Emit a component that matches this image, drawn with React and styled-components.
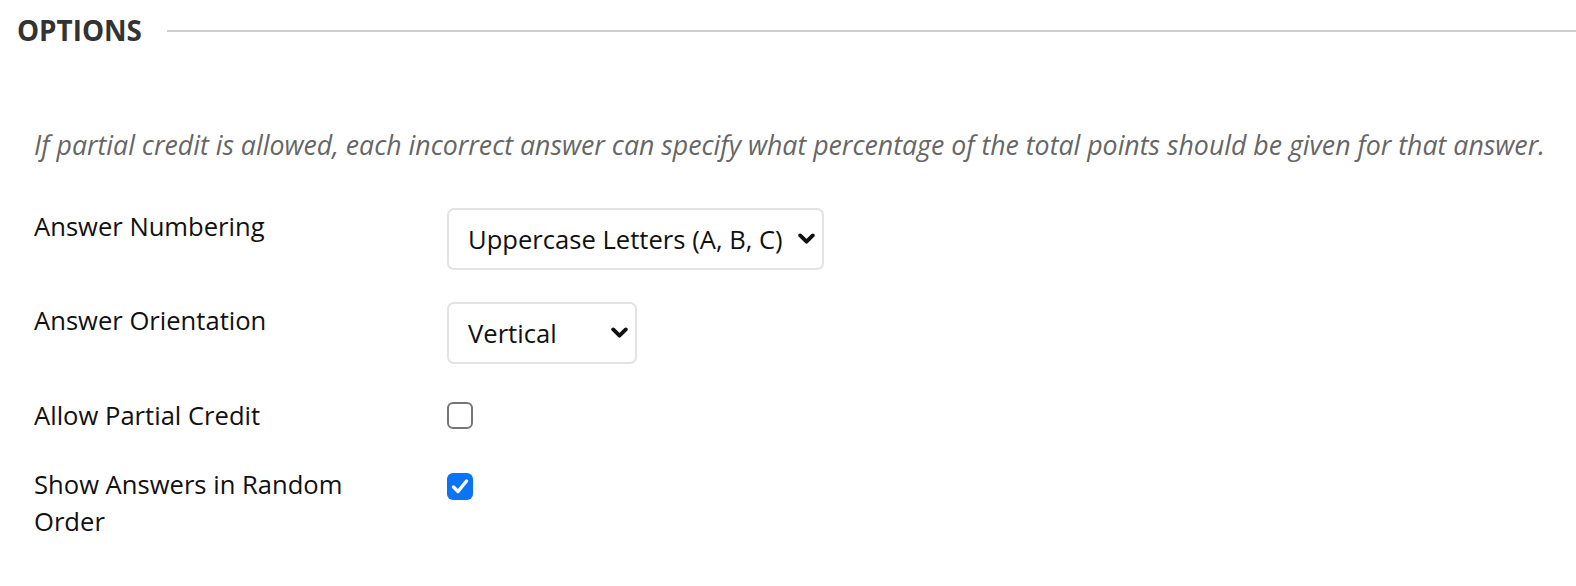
import React from "react";
import styled, { createGlobalStyle } from "styled-components";

const Global = createGlobalStyle`
  html, body { margin: 0; padding: 0; background: #fff; }
  body { font-family: "Open Sans", "Liberation Sans", sans-serif; color: #111; }
`;

const Page = styled.div`
  padding: 10px 0 0 17px;
  width: 1576px;
  box-sizing: border-box;
`;

const Header = styled.div`
  display: flex;
  align-items: center;
  gap: 25px;
`;

const HeaderTitle = styled.h2`
  margin: 0;
  font-size: 27.8px;
  line-height: 40px;
  font-weight: 700;
  color: #333;
`;

const Rule = styled.div`
  flex: 1;
  height: 2px;
  background: #cfcfcf;
  margin-top: 1px;
`;

const Body = styled.div`
  padding: 76px 0 0 17px;
`;

const Hint = styled.p`
  margin: 0 0 44px;
  font-size: 26.7px;
  line-height: 38px;
  font-style: italic;
  color: #666;
  white-space: nowrap;
`;

const Form = styled.div`
  display: grid;
  grid-template-columns: 413px auto;
  align-items: start;
  row-gap: ${(p) => p.$gap}px;
`;

const Row = styled.div`
  display: contents;
`;

const Label = styled.div`
  font-size: 25.6px;
  line-height: 37px;
  color: #111;
  width: 330px;
  padding-top: ${(p) => p.$top || 0}px;
`;

const Control = styled.div`
  padding-top: ${(p) => p.$top || 0}px;
`;

const SelectWrap = styled.div`
  position: relative;
  width: ${(p) => p.$w}px;
  height: 62px;
  box-sizing: border-box;
  border: 2px solid #e3e3e3;
  border-radius: 7px;
  background: #fff;
`;

const NativeSelect = styled.select`
  appearance: none;
  -webkit-appearance: none;
  border: none;
  outline: none;
  background: transparent;
  width: 100%;
  height: 100%;
  padding: 0 40px 0 19px;
  font-family: "Open Sans", "Liberation Sans", sans-serif;
  font-size: 25.6px;
  color: #111;
  cursor: pointer;
`;

const Chevron = styled.svg`
  position: absolute;
  right: 7px;
  top: 50%;
  width: 17px;
  height: 12px;
  margin-top: -6px;
  pointer-events: none;
`;

const Box = styled.span`
  display: inline-block;
  box-sizing: border-box;
  width: 26px;
  height: 27px;
  border-radius: 6px;
  border: ${(p) => (p.$checked ? "none" : "2px solid #767676")};
  background: ${(p) => (p.$checked ? "#0b74f5" : "#fff")};
  position: relative;
  vertical-align: top;
`;

const Tick = styled.svg`
  position: absolute;
  left: 4px;
  top: 5px;
  width: 18px;
  height: 17px;
`;

function Select({ width, value, options }) {
  return (
    <SelectWrap $w={width}>
      <NativeSelect defaultValue={value}>
        {options.map((o) => (
          <option key={o}>{o}</option>
        ))}
      </NativeSelect>
      <Chevron viewBox="0 0 17 12">
        <path d="M2.2 2.4 L8.5 8.7 L14.8 2.4" fill="none" stroke="#111" strokeWidth="3.8" strokeLinecap="round" strokeLinejoin="round" />
      </Chevron>
    </SelectWrap>
  );
}

function Checkbox({ checked }) {
  return (
    <Box $checked={checked}>
      {checked && (
        <Tick viewBox="0 0 18 17">
          <path d="M2.5 9 L7 13.5 L15.5 3" fill="none" stroke="#fff" strokeWidth="3.4" strokeLinecap="round" strokeLinejoin="round" />
        </Tick>
      )}
    </Box>
  );
}

export default function App() {
  return (
    <>
      <Global />
      <Page>
        <Header>
          <HeaderTitle>OPTIONS</HeaderTitle>
          <Rule />
        </Header>
        <Body>
          <Hint>
            If partial credit is allowed, each incorrect answer can specify what percentage of the total points should be given for that answer.
          </Hint>
          <Form $gap={32}>
            <Row>
              <Label>Answer Numbering</Label>
              <Control>
                <Select width={377} value="Uppercase Letters (A, B, C)" options={["Uppercase Letters (A, B, C)", "Lowercase Letters (a, b, c)", "Numbers (1, 2, 3)"]} />
              </Control>
            </Row>
            <Row>
              <Label>Answer Orientation</Label>
              <Control>
                <Select width={190} value="Vertical" options={["Vertical", "Horizontal"]} />
              </Control>
            </Row>
            <Row>
              <Label $top={1}>Allow Partial Credit</Label>
              <Control $top={6}>
                <Checkbox checked={false} />
              </Control>
            </Row>
            <Row>
              <Label $top={0}>Show Answers in Random Order</Label>
              <Control $top={7}>
                <Checkbox checked />
              </Control>
            </Row>
          </Form>
        </Body>
      </Page>
    </>
  );
}
